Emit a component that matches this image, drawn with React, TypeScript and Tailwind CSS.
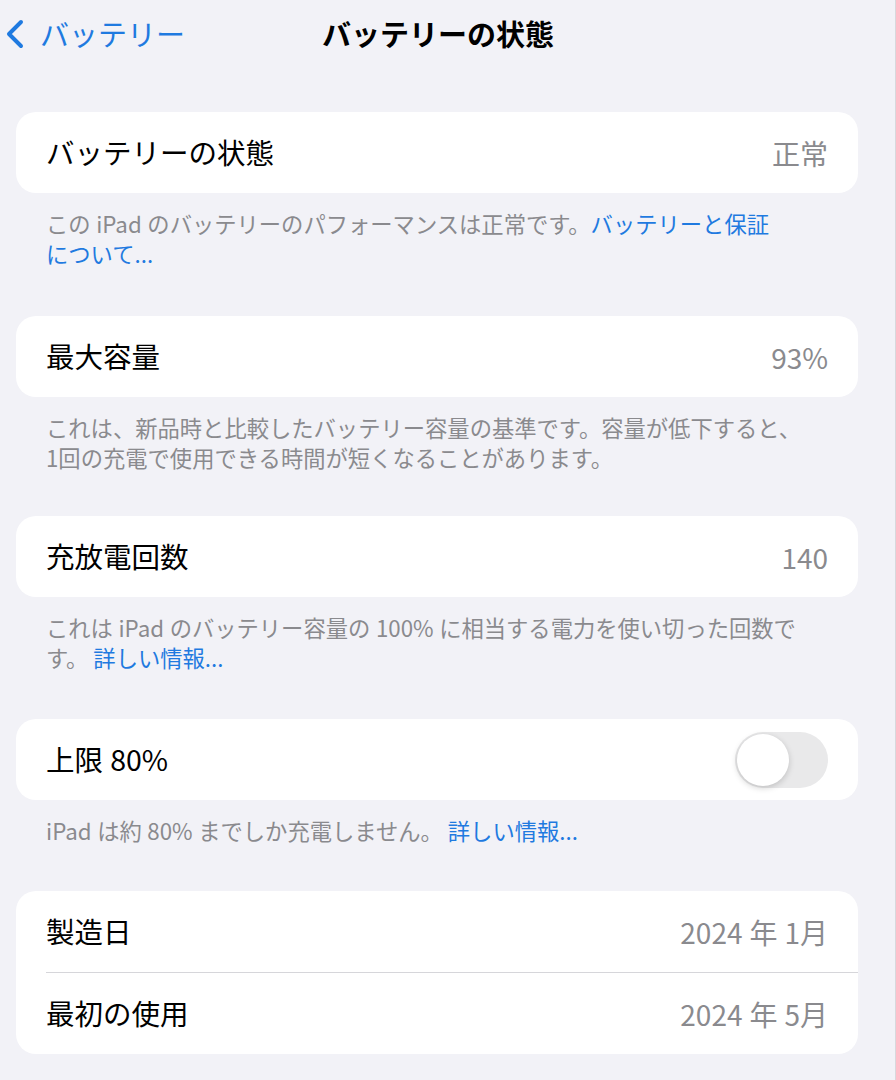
import React from "react";

const font = { fontFamily: '"Noto Sans CJK JP", "Noto Sans", sans-serif' };
// narrow gap iOS puts between Japanese and Latin text
const g = "\u2005";

function Row({ label, value, children }: { label: string; value?: string; children?: React.ReactNode }) {
  return (
    <div className="flex h-[81px] items-center justify-between pl-[30px] pr-[30px]">
      <span className="text-[28.5px] text-black">{label}</span>
      {value && <span className="text-[28px] text-[#8a8a8e]">{value}</span>}
      {children}
    </div>
  );
}

function Footer({ children, className }: { children: React.ReactNode; className: string }) {
  return (
    <div className={`pl-[46px] pr-[30px] pt-[15px] text-[22.3px] leading-[30px] text-[#8a8a8e] ${className}`}>
      {children}
    </div>
  );
}

function Card({ children }: { children: React.ReactNode }) {
  return <div className="ml-[16px] w-[842px] overflow-hidden rounded-[20px] bg-white">{children}</div>;
}

const Link = ({ children }: { children: React.ReactNode }) => (
  <span className="text-[#1f7ae0]">{children}</span>
);

export default function App() {
  return (
    <div className="min-h-[1080px] w-[896px] border-r border-[#d8d8dc] bg-[#f2f2f7]" style={font}>
      {/* Nav bar */}
      <div className="relative flex h-[68px] items-center">
        <div className="flex items-center pl-[5px] text-[#1f7ae0]">
          <svg width="20" height="30" viewBox="0 0 20 30" fill="none">
            <path d="M16 3 L4 15 L16 27" stroke="currentColor" strokeWidth="4" strokeLinecap="round" strokeLinejoin="round" />
          </svg>
          <span className="ml-[15px] text-[29px]">バッテリー</span>
        </div>
        <div className="absolute left-[322px] top-0 flex h-[68px] items-center text-[29px] font-bold text-black">
          バッテリーの状態
        </div>
      </div>

      <div className="pt-[44px]">
        <Card>
          <Row label="バッテリーの状態" value="正常" />
        </Card>
        <Footer className="pb-[48px]">
          この{g}iPad{g}のバッテリーのパフォーマンスは正常です。<Link>バッテリーと保証</Link>
          <br />
          <Link>について...</Link>
        </Footer>

        <Card>
          <Row label="最大容量" value="93%" />
        </Card>
        <Footer className="pb-[44px]">
          これは、新品時と比較したバッテリー容量の基準です。容量が低下すると、
          <br />
          1回の充電で使用できる時間が短くなることがあります。
        </Footer>

        <Card>
          <Row label="充放電回数" value="140" />
        </Card>
        <Footer className="pb-[47px]">
          これは{g}iPad{g}のバッテリー容量の{g}100%{g}に相当する電力を使い切った回数で
          <br />
          す。 <Link>詳しい情報...</Link>
        </Footer>

        <Card>
          <Row label={`上限${g}80%`}>
            <div className="flex h-[56px] w-[93px] items-center rounded-full bg-[#e9e9ea] p-[2px]">
              <div className="h-[52px] w-[52px] rounded-full bg-white shadow-[0_2px_6px_rgba(0,0,0,0.18)]" />
            </div>
          </Row>
        </Card>
        <Footer className="pb-[46px]">
          iPad{g}は約{g}80%{g}までしか充電しません。 <Link>詳しい情報...</Link>
        </Footer>

        <Card>
          <Row label="製造日" value={`2024${g}年${g}1月`} />
          <div className="ml-[30px] h-px bg-[#d6d6da]" />
          <Row label="最初の使用" value={`2024${g}年${g}5月`} />
        </Card>
      </div>
    </div>
  );
}
